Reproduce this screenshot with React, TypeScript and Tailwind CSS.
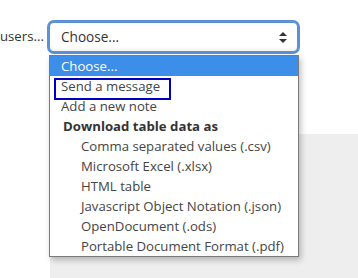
import React from 'react';

const groupItems = [
  'Comma separated values (.csv)',
  'Microsoft Excel (.xlsx)',
  'HTML table',
  'Javascript Object Notation (.json)',
  'OpenDocument (.ods)',
  'Portable Document Format (.pdf)',
];

export default function App() {
  return (
    <div
      className="relative w-[358px] h-[278px] overflow-hidden bg-white text-[#333]"
      style={{ fontFamily: '"Open Sans", "Noto Sans", Arial, sans-serif' }}
    >
      <div className="flex items-center pt-[20px] h-[54px]">
        <span className="w-[47px] shrink-0 pr-[7px] text-right text-[13.2px] text-[#333] whitespace-nowrap">users...</span>
        <div className="flex items-center justify-between w-[253px] h-[34px] border-[3px] border-[#5a92d5] rounded-[7px] bg-white pl-[11px] pr-[10px] shadow-[inset_0_-4px_4px_-3px_rgba(0,0,0,0.08)]">
          <span className="text-[13.6px] text-[#333]">Choose...</span>
          <svg width="8" height="11" viewBox="0 0 8 11" className="text-[#333]">
            <path d="M4 0 L8 4 H0 Z" fill="currentColor" />
            <path d="M4 11 L8 7 H0 Z" fill="currentColor" />
          </svg>
        </div>
      </div>

      <div className="ml-[50px] mt-[80px] h-[200px] bg-[#eeeeee]" />

      {/* open dropdown list */}
      <div className="absolute left-[49px] top-[55px] w-[250px] border border-[#7a7a7a] bg-white shadow-[2px_3px_6px_rgba(0,0,0,0.25)] text-[13.2px] leading-[20px]">
        <div className="h-[20px] bg-[#3d8ee9] text-white pl-[11px]">Choose...</div>
        <div className="h-[20px] pl-[11px] text-[#444]">Send a message</div>
        <div className="h-[20px] pl-[11px] text-[#444]">Add a new note</div>
        <div className="h-[20px] pl-[13px] font-bold text-[#333]">Download table data as</div>
        {groupItems.map(item => (
          <div key={item} className="h-[20px] pl-[31px] text-[#444] whitespace-nowrap">
            {item}
          </div>
        ))}
      </div>

      <div className="absolute left-[54px] top-[78px] w-[117px] h-[22px] border-2 border-[#0000c0]" />
    </div>
  );
}
